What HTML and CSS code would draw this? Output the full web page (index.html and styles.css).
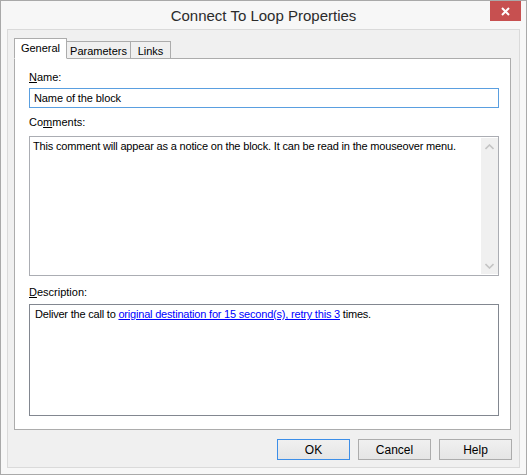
FILE: index.html
```html
<!DOCTYPE html>
<html>
<head>
<meta charset="utf-8">
<link rel="stylesheet" href="styles.css">
</head>
<body>
<div class="window">
  <div class="titlebar">
    <span class="title">Connect To Loop Properties</span>
    <div class="close">
      <svg width="9" height="9" viewBox="0 0 9 9"><path d="M1 1 L8 8 M8 1 L1 8" stroke="#fff" stroke-width="2" fill="none"/></svg>
    </div>
  </div>
  <div class="frame">
    <div class="tabs">
      <div class="tab tab-general selected">General</div>
      <div class="tab tab-params">Parameters</div>
      <div class="tab tab-links">Links</div>
    </div>
    <div class="panel">
      <div class="label label-name"><u>N</u>ame:</div>
      <div class="input">Name of the block</div>
      <div class="label label-comments">Co<u>m</u>ments:</div>
      <div class="box comments">
        <div class="box-text">This comment will appear as a notice on the block. It can be read in the mouseover menu.</div>
        <div class="scrollbar">
          <svg width="9" height="6" viewBox="0 0 9 6"><path d="M0.5 5 L4.5 1 L8.5 5" stroke="#c4c4c4" stroke-width="1.6" fill="none"/></svg>
          <svg width="9" height="6" viewBox="0 0 9 6"><path d="M0.5 1 L4.5 5 L8.5 1" stroke="#c4c4c4" stroke-width="1.6" fill="none"/></svg>
        </div>
      </div>
      <div class="label label-desc"><u>D</u>escription:</div>
      <div class="box description">
        <div class="desc-text">Deliver the call to <a class="link">original destination for 15 second(s), retry this 3</a> times.</div>
      </div>
    </div>
    <div class="buttons">
      <div class="btn default">OK</div>
      <div class="btn">Cancel</div>
      <div class="btn">Help</div>
    </div>
  </div>
</div>
</body>
</html>
```

FILE: styles.css
```css
html, body {
  margin: 0;
  padding: 0;
  background: #ffffff;
}
body {
  font-family: "Liberation Sans", Arial, sans-serif;
  font-size: 11px;
  color: #000;
}
.window {
  width: 527px;
  height: 475px;
  box-sizing: border-box;
  border: 1px solid #a9a9a9;
  background: #f7f7f7;
  display: flex;
  flex-direction: column;
}
.titlebar {
  height: 28px;
  position: relative;
  display: flex;
  align-items: center;
  justify-content: center;
}
.title {
  font-size: 15px;
  color: #2b2b2b;
  padding-top: 1px;
}
.close {
  position: absolute;
  top: 0;
  right: 5px;
  width: 31px;
  height: 20px;
  background: #c75050;
  display: flex;
  align-items: center;
  justify-content: center;
}
.frame {
  margin: 0 6px 6px;
  flex: 1;
  border: 1px solid #dadada;
  background: #f0f0f0;
  padding: 8px 8px 0 6px;
  display: flex;
  flex-direction: column;
}
.tabs {
  display: flex;
  align-items: flex-end;
  height: 21px;
  margin-bottom: -1px;
  position: relative;
  z-index: 1;
}
.tab {
  box-sizing: border-box;
  height: 18px;
  border: 1px solid #acacac;
  background: #f0f0f0;
  display: flex;
  align-items: center;
  justify-content: center;
  margin-left: -1px;
  padding-top: 1px;
}
.tab-general { width: 53px; margin-left: 0; }
.tab-params { width: 65px; }
.tab-links { width: 41px; }
.tab.selected {
  height: 21px;
  background: #fff;
  border-bottom-color: #fff;
  position: relative;
  z-index: 2;
  padding-top: 0;
  padding-bottom: 1px;
}
.panel {
  height: 372px;
  box-sizing: border-box;
  border: 1px solid #acacac;
  background: #fff;
  padding: 11px 11px 0 14px;
}
.label {
  line-height: 15px;
  height: 15px;
}
.label-name { margin-bottom: 3px; }
.label-comments { margin-top: 7px; margin-bottom: 6px; }
.label-desc { margin-top: 9px; margin-bottom: 4px; }
.input {
  height: 20px;
  box-sizing: border-box;
  border: 1px solid #5a9fe0;
  padding: 0 4px;
  line-height: 18px;
  letter-spacing: -0.1px;
}
.box {
  box-sizing: border-box;
  border: 1px solid #abadb3;
}
.comments {
  height: 140px;
  display: flex;
}
.box-text {
  flex: 1;
  padding: 2px 3px;
  line-height: 15px;
  letter-spacing: -0.17px;
}
.scrollbar {
  width: 17px;
  margin: 1px 0;
  background: #f0f0f0;
  display: flex;
  flex-direction: column;
  justify-content: space-between;
  align-items: center;
  padding: 6px 0 5px;
}
.description {
  height: 112px;
  border-color: #828790;
}
.desc-text {
  padding: 2px 5px;
  line-height: 15px;
  letter-spacing: -0.2px;
}
.link {
  color: #0000ff;
  text-decoration: underline;
}
.buttons {
  display: flex;
  justify-content: flex-end;
  gap: 8px;
  padding-top: 9px;
  margin-right: -1px;
}
.btn {
  width: 73px;
  height: 21px;
  box-sizing: border-box;
  border: 1px solid #acacac;
  background: linear-gradient(#f0f0f0, #e5e5e5);
  display: flex;
  align-items: center;
  justify-content: center;
  font-size: 12px;
}
.btn.default {
  border-color: #3c8ee8;
}
```
